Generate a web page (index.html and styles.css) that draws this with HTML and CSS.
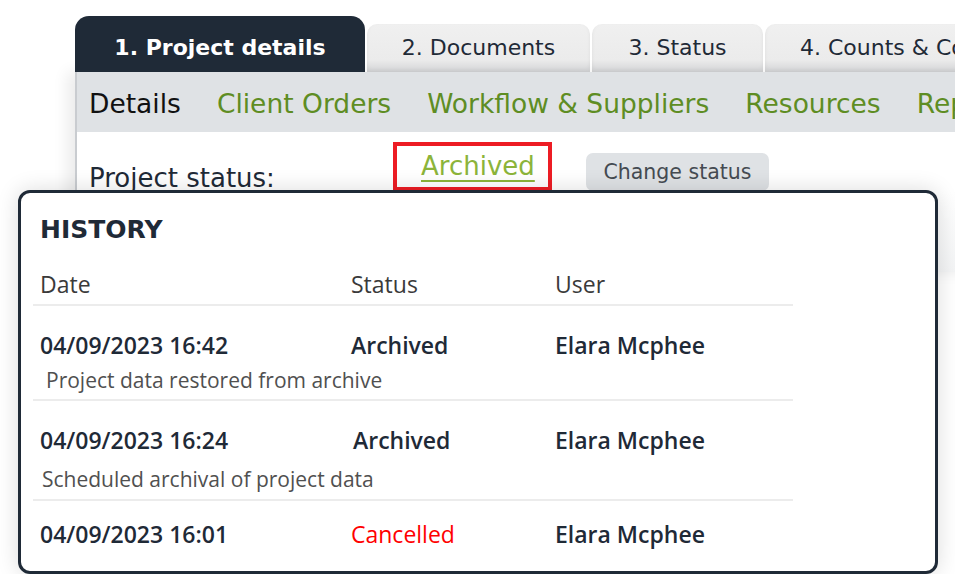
FILE: index.html
```html
<!DOCTYPE html>
<html lang="en">
<head>
  <meta charset="UTF-8">
  <title>Project details</title>
  <link rel="stylesheet" href="styles.css">
</head>
<body>
  <div class="page">
    <div class="tabs">
      <div class="tab active">1. Project details</div>
      <div class="tab tab_docs">2. Documents</div>
      <div class="tab tab_status">3. Status</div>
      <div class="tab tab_counts">4. Counts &amp; Costs</div>
    </div>
    <div class="panel">
      <div class="subnav">
        <span class="current">Details</span>
        <a href="#">Client Orders</a>
        <a href="#">Workflow &amp; Suppliers</a>
        <a href="#">Resources</a>
        <a href="#">Reports</a>
      </div>
      <div class="status_row">
        <span class="label">Project status:</span>
        <span class="highlight"><a href="#" class="status_link">Archived</a></span>
        <button class="change_btn">Change status</button>
      </div>
    </div>
  </div>

  <div class="history">
    <h2>HISTORY</h2>
    <div class="hist_table">
      <div class="hist_head">
        <span class="col_date">Date</span>
        <span class="col_status">Status</span>
        <span class="col_user">User</span>
      </div>
      <div class="hist_row">
        <div class="hist_main">
          <span class="col_date">04/09/2023 16:42</span>
          <span class="col_status">Archived</span>
          <span class="col_user">Elara Mcphee</span>
        </div>
        <div class="hist_note">Project data restored from archive</div>
      </div>
      <div class="hist_row">
        <div class="hist_main">
          <span class="col_date">04/09/2023 16:24</span>
          <span class="col_status shifted">Archived</span>
          <span class="col_user">Elara Mcphee</span>
        </div>
        <div class="hist_note note2">Scheduled archival of project data</div>
      </div>
      <div class="hist_row last">
        <div class="hist_main">
          <span class="col_date">04/09/2023 16:01</span>
          <span class="col_status cancelled">Cancelled</span>
          <span class="col_user">Elara Mcphee</span>
        </div>
      </div>
    </div>
  </div>
</body>
</html>
```

FILE: styles.css
```css
html, body {
  margin: 0;
  height: 100%;
  overflow: hidden;
  background: #fff;
}

body {
  font-family: "DejaVu Sans", "Noto Sans", sans-serif;
  color: #1f2a37;
}

.page {
  padding: 16px 0 0 75px;
}

.tabs {
  display: flex;
  align-items: flex-end;
  gap: 2px;
  white-space: nowrap;
}

.tab {
  flex-shrink: 0;
  height: 48px;
  line-height: 48px;
  font-size: 22px;
  color: #1f2a37;
  text-align: center;
  background: linear-gradient(#f0f0f0, #ebebeb 75%, #d3d4d6);
  border-radius: 10px 10px 0 0;
  box-shadow: inset 0 -2px 4px rgba(0, 0, 0, 0.06);
  box-sizing: border-box;
}

.active {
  height: 56px;
  line-height: 64px;
  width: 290px;
  background: #1f2a37;
  color: #fff;
  font-weight: 700;
  border-radius: 14px 14px 0 0;
  box-shadow: none;
}

.tab_docs {
  width: 223px;
}

.tab_status {
  width: 171px;
}

.tab_counts {
  width: 260px;
  text-align: left;
  padding-left: 35px;
}

.panel {
  width: 1000px;
  height: 200px;
  border-left: 2px solid #c9ccd0;
  box-shadow: -8px 0 14px rgba(0, 0, 0, 0.08);
  background: linear-gradient(#fff 60%, #f3f4f5);
}

.subnav {
  display: flex;
  gap: 36px;
  height: 60px;
  box-sizing: border-box;
  padding: 3px 0 0 12px;
  align-items: center;
  background: #dfe2e5;
  font-size: 26.5px;
  white-space: nowrap;
}

.subnav .current {
  color: #111;
}

.subnav a {
  color: #5e8d23;
  text-decoration: none;
}

.status_row {
  display: flex;
  align-items: flex-start;
  padding: 10px 0 0 12px;
}

.label {
  width: 304px;
  margin-top: 21px;
  font-size: 26px;
  line-height: 30px;
  color: #1f2a37;
}

.highlight {
  width: 127px;
  height: 41px;
  padding-left: 24px;
  border: 4px solid #ed1c24;
}

.status_link {
  font-size: 26px;
  line-height: 40px;
  color: #8cb43a;
  text-decoration: underline;
  text-underline-offset: 5px;
  text-decoration-thickness: 2px;
}

.change_btn {
  margin: 11px 0 0 34px;
  height: 38px;
  width: 183px;
  padding: 0;
  border: none;
  border-radius: 7px;
  background: #dfe2e5;
  color: #454b52;
  font-family: inherit;
  font-size: 20.5px;
}

.history {
  position: absolute;
  left: 18px;
  top: 190px;
  width: 920px;
  height: 384px;
  box-sizing: border-box;
  border: 3px solid #1f2a37;
  border-radius: 12px;
  background: #fff;
  box-shadow: 0 0 22px rgba(0, 0, 0, 0.14);
  padding: 20px 0 0 12px;
  font-family: "Open Sans", "Noto Sans", sans-serif;
}

.history h2 {
  margin: 0 0 0 7px;
  font-family: "DejaVu Sans", sans-serif;
  font-size: 25px;
  font-weight: 700;
  line-height: 34px;
  color: #1f2a37;
}

.hist_table {
  width: 760px;
  margin-top: 22px;
}

.hist_head,
.hist_main {
  display: flex;
  padding-left: 7px;
  font-size: 23px;
  line-height: 30px;
}

.col_date {
  width: 311px;
}

.col_status {
  width: 204px;
}

.shifted {
  padding-left: 2px;
  width: 202px;
}

.hist_head {
  color: #3a3a3a;
  padding-bottom: 5px;
  border-bottom: 2px solid #ececec;
}

.hist_row {
  border-bottom: 2px solid #ececec;
}

.hist_row.last {
  border-bottom: none;
}

.hist_main {
  font-weight: 600;
  color: #1f2a37;
  padding-top: 24px;
}

.hist_row.last .hist_main {
  padding-top: 18px;
}

.hist_note {
  font-size: 21px;
  line-height: 28px;
  color: #505050;
  padding: 6px 0 5px 13px;
}

.note2 {
  padding: 10px 0 6px 9px;
}

.cancelled {
  color: #f00;
  font-weight: 400;
}
```
